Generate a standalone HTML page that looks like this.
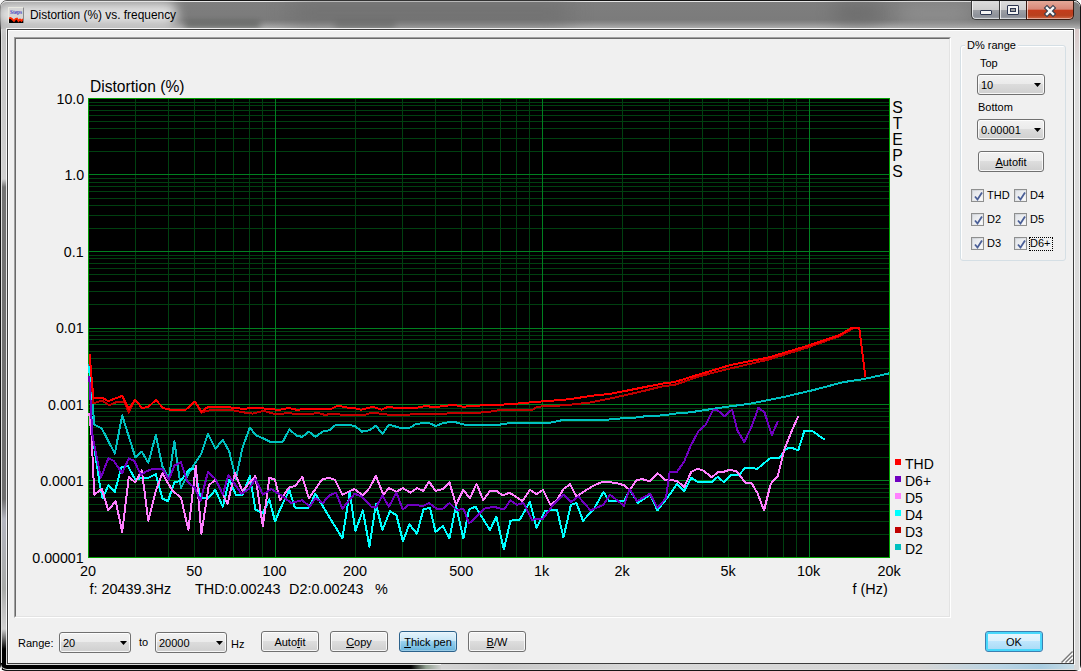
<!DOCTYPE html>
<html><head><meta charset="utf-8">
<style>
*{margin:0;padding:0;box-sizing:border-box}
html,body{width:1081px;height:671px;overflow:hidden;background:#fff}
body{position:relative;font-family:"Liberation Sans",sans-serif;font-size:11px;color:#000}
.a{position:absolute}
#frame{left:0;top:0;width:1081px;height:671px;border-radius:7px 7px 0 0;
 background:linear-gradient(90deg,#b9b9b9 0%,#9a9a9a 20%,#8a8a8a 50%,#8c8c8c 80%,#a0a0a0 100%);
 border:1px solid #2a2a2a;}
#client{left:7px;top:29px;width:1067px;height:635px;border:1px solid #3c3c3c;background:#f0f0f0;box-shadow:0 0 0 1px rgba(255,255,255,.85)}
#clientin{left:8px;top:30px;width:1065px;height:633px;border-top:1px solid #fff;border-left:1px solid #fff}
.btn{position:absolute;border:1px solid #707070;border-radius:3px;
 background:linear-gradient(#f2f2f2 0%,#ebebeb 50%,#dddddd 50%,#cfcfcf 100%);
 box-shadow:inset 0 0 0 1px rgba(255,255,255,.8);text-align:center;line-height:21px;font-size:11px}
.cmb{position:absolute;border:1px solid #707070;border-radius:3px;
 background:linear-gradient(#f2f2f2 0%,#ebebeb 45%,#dddddd 45%,#cfcfcf 100%);
 box-shadow:inset 0 0 0 1px rgba(255,255,255,.8);line-height:21px;font-size:11px;padding-left:3px}
.cmb:after{content:"";position:absolute;right:3px;top:8px;width:7px;height:4px;background:#000;clip-path:polygon(0 0,100% 0,50% 100%)}
.u{text-decoration:underline}
.cb{position:absolute;width:13px;height:13px;border:1px solid #8e8f8f;background:linear-gradient(135deg,#cbcfd5,#f6f6f6)}
.cb:before{content:"";position:absolute;left:1px;top:1px;width:9px;height:9px;background:linear-gradient(135deg,#e0e3e8,#fafafa)}
.cb svg{position:absolute;left:0;top:0}
.lbl{position:absolute;font-size:11px;white-space:nowrap}
</style></head><body>
<div id="frame" class="a" style="left:0;top:0;width:1081px;height:671px;border-radius:7px 7px 6px 6px;background:#d6d6d6;border:1px solid #151515"></div>
<div class="a" style="left:1px;top:1px;width:1079px;height:28px;border-radius:6px 6px 0 0;background:linear-gradient(#7e7e7e 0px,#7b7b7b 18px,#8a8a8a 21px,#b4b4b4 27px);border-top:1px solid #e6e6e6"></div>
<div class="a" style="left:185px;top:22px;width:75px;height:6px;background:#3c403c;filter:blur(3px);opacity:.6"></div>
<div class="a" style="left:335px;top:22px;width:60px;height:6px;background:#3c403c;filter:blur(3px);opacity:.45"></div>
<div class="a" style="left:1px;top:29px;width:6px;height:641px;background:linear-gradient(#c4c4c4 0px,#d0d0d0 150px,#747474 158px,#6e6e6e 470px,#b4b6c0 490px,#a8aaa8 560px,#c0c0c0 580px,#d0d0d0 600px,#000 620px,#000 641px);border-left:1px solid #e0e0e0"></div>
<div class="a" style="left:1px;top:663px;width:440px;height:7px;background:linear-gradient(90deg,#000 0,#000 410px,#90a090 425px,#d0d0d0 440px);border-bottom:1px solid #d8d8d8;border-radius:0 0 0 6px"></div>
<div class="a" style="left:1074px;top:29px;width:6px;height:641px;background:linear-gradient(#d8c8c8 0,#dcdcdc 40px,#d8d8d8 100%);border-right:1px solid #f0f0f0"></div>
<div class="a" style="left:290px;top:2px;width:280px;height:22px;background:#6c6c6c;filter:blur(12px);opacity:.8"></div>
<div class="a" style="left:835px;top:4px;width:45px;height:18px;background:#626262;filter:blur(10px);opacity:.7"></div>
<div class="a" style="left:900px;top:4px;width:70px;height:20px;background:#a0a0a0;filter:blur(10px);opacity:.6"></div>
<div id="glowt" class="a" style="left:-4px;top:2px;width:181px;height:25px;background:#e0e0e0;filter:blur(6px);border-radius:10px"></div>
<!-- icon -->
<div class="a" style="left:8px;top:7px;width:16px;height:16px;background:#d6d6d6;border-top:1px solid #e8e8e0;border-left:1px solid #e8e8e0;border-right:1px solid #8a8a8a;overflow:hidden">
 <svg class="a" style="left:-1px;top:-1px" width="16" height="16">
 <text x="2" y="7.3" font-size="5.8" font-family="Liberation Serif" fill="#4848c0" textLength="12" lengthAdjust="spacingAndGlyphs" font-weight="bold">Steps</text>
 <path d="M1 11.5 L2.5 11 L4 12 L6 14 L7.5 12 L9 11.5 L10.5 14 L12 12.5 L13.5 14 L15 12 V16 H1Z" fill="#000"/>
 <path d="M1 11.5 L2.5 11 L4 12 L6 14 L7.5 12 L9 11.5 L10.5 14 L12 12.5 L13.5 14 L15 12" stroke="#ff2800" stroke-width="1.8" fill="none"/></svg>
</div>
<div class="lbl" style="left:30px;top:8px;font-size:11.9px;color:#000">Distortion (%) vs. frequency</div>
<!-- caption buttons -->
<div class="a" style="left:971px;top:1px;width:29px;height:19px;border:1px solid #3a3a3a;border-top:none;border-right:none;border-radius:0 0 0 5px;background:linear-gradient(#dcdcdc 0%,#cdcdcd 48%,#9ea0a6 52%,#8c9098 85%,#a8abb2 100%);box-shadow:inset 1px 0 0 rgba(255,255,255,.7),inset 0 -1px 0 rgba(255,255,255,.55)"></div>
<div class="a" style="left:980px;top:10px;width:12px;height:5px;border:1px solid #2c3650;background:#f4f4f4;border-radius:1px"></div>
<div class="a" style="left:999px;top:1px;width:28px;height:19px;border-left:1px solid #3a3a3a;border-bottom:1px solid #3a3a3a;background:linear-gradient(#dcdcdc 0%,#cdcdcd 48%,#9ea0a6 52%,#8c9098 85%,#a8abb2 100%);box-shadow:inset 1px 0 0 rgba(255,255,255,.7),inset 0 -1px 0 rgba(255,255,255,.55)"></div>
<div class="a" style="left:1007px;top:5px;width:12px;height:10px;border:1px solid #2c3650;background:#f4f4f4;border-radius:1px"></div>
<div class="a" style="left:1010px;top:8px;width:6px;height:4px;border:1px solid #2c3650;background:#a0a0a0"></div>
<div class="a" style="left:1026px;top:1px;width:48px;height:19px;border:1px solid #3a1a10;border-top:none;border-radius:0 0 5px 0;background:linear-gradient(#e4a898 0%,#d88878 45%,#c43c1c 52%,#b8401e 80%,#d06848 100%);box-shadow:inset 1px 0 0 rgba(255,255,255,.6),inset 0 -1px 0 rgba(255,255,255,.45)"></div>
<svg class="a" style="left:1040px;top:2px" width="20" height="16"><path d="M7 6 L13 12 M13 6 L7 12" stroke="#3a4050" stroke-width="4.6" stroke-linecap="square"/><path d="M7 6 L13 12 M13 6 L7 12" stroke="#f8f8f8" stroke-width="2.4" stroke-linecap="square"/></svg>
<div id="client" class="a"></div>
<div id="clientin" class="a"></div>
<!-- chart panel sunken -->
<div class="a" style="left:14px;top:37px;width:937px;height:581px;border-top:1px solid #a0a0a0;border-left:1px solid #a0a0a0;border-right:1px solid #fff;border-bottom:1px solid #fff"></div>
<div class="a" style="left:15px;top:38px;width:935px;height:579px;border-top:1px solid #696969;border-left:1px solid #696969;border-right:1px solid #e3e3e3;border-bottom:1px solid #e3e3e3"></div>
<svg width="1081" height="671" style="position:absolute;left:0;top:0" font-family='"Liberation Sans", sans-serif' fill="#000">
<rect x="88" y="98" width="801" height="459" fill="#000"/>
<path d="M135.5 98V557M168.5 98V557M194.5 98V557M215.5 98V557M233.5 98V557M249.5 98V557M262.5 98V557M355.5 98V557M402.5 98V557M435.5 98V557M461.5 98V557M482.5 98V557M500.5 98V557M516.5 98V557M529.5 98V557M622.5 98V557M669.5 98V557M702.5 98V557M728.5 98V557M749.5 98V557M767.5 98V557M783.5 98V557M796.5 98V557M88 534.5H889M88 521.5H889M88 511.5H889M88 504.5H889M88 497.5H889M88 492.5H889M88 488.5H889M88 484.5H889M88 457.5H889M88 444.5H889M88 434.5H889M88 427.5H889M88 421.5H889M88 416.5H889M88 411.5H889M88 408.5H889M88 381.5H889M88 368.5H889M88 358.5H889M88 351.5H889M88 344.5H889M88 339.5H889M88 335.5H889M88 331.5H889M88 304.5H889M88 291.5H889M88 281.5H889M88 274.5H889M88 268.5H889M88 263.5H889M88 258.5H889M88 255.5H889M88 228.5H889M88 215.5H889M88 205.5H889M88 198.5H889M88 191.5H889M88 186.5H889M88 182.5H889M88 178.5H889M88 151.5H889M88 138.5H889M88 128.5H889M88 121.5H889M88 115.5H889M88 110.5H889M88 105.5H889M88 102.5H889" stroke="#004010" stroke-width="1" fill="none"/>
<path d="M275.5 98V557M542.5 98V557M809.5 98V557M88 480.5H889M88 404.5H889M88 328.5H889M88 251.5H889M88 174.5H889" stroke="#008020" stroke-width="1" fill="none"/>
<rect x="88.5" y="98.5" width="801" height="459" fill="none" stroke="#00a000"/>
<g clip-path="url(#clip)"><polyline points="89.2,364 94.3,424.7 101.8,428.5 114.8,453.6 122.2,415.4 135.3,457.3 141.8,451.7 148.3,462.9 155.8,435 162.3,466 168.8,478.8 174.4,441.5 180.9,488.1 189.3,472.2 201.4,453.6 207.9,434 215.4,449 222.8,439.6 229.3,451.7 235.8,478.8 242.4,448 249.8,427.5 255.4,435 263.8,438.7 271.2,442.4 282.4,442.4 289.3,429.4 296.8,435.9 302.3,436.8 308.9,431.6 315.4,436.8 322.8,431.6 329.3,430.3 335.9,424.7 344.2,424.7 354.5,425.7 361.9,431.6 369.4,430.3 375.9,425.7 382.4,434 388.9,424.7 399.2,427.5 410.4,427.5 415.9,423.8 429,422.9 435.5,426 443.9,422.9 453.2,421.6 464.4,424.7 480,424.7 499.2,424.7 511.3,422.9 549.5,422.9 562.5,420.1 597.9,419.7 603.5,420.1 618.4,418.6 638.9,417.3 646.3,416 663.1,415.4 675,413.6 690.4,412.3 720.9,407.6 751.4,403.5 781.9,397.4 812.4,390.3 843,382.2 863.3,379.1 879.6,375.6 889,373.4" stroke="#00c0c0" stroke-width="2" fill="none" stroke-linejoin="round" shape-rendering="crispEdges"/><polyline points="89.5,354 93.4,403.3 101.8,400.5 109.2,405.2 117.6,401.5 124.1,401.5 128.8,412.6 135.3,399.6 141.8,408 148.3,407 155.8,400 163.2,408 170.7,409.8 185.6,409.8 194.9,401.5 201.4,412.6 211.6,409.8 230.2,409.8 245.1,412.6 252.6,413.6 263.8,410.8 273.1,413.6 280,414.1 287.4,413 296.8,414.1 311.7,414.1 317.2,412.6 324.7,414.9 334,413.6 345.2,415.4 363.8,415.4 371.2,412.6 389.9,414.9 410.4,414.5 443.9,413.6 480,412.6 489.9,411.7 497.3,410.4 531.8,410.4 537.4,406.7 566.2,405.2 590.5,402.4 609.1,398.7 624,395.5 642.6,391.2 661.2,386.6 675,384.7 700.5,376 731,368.3 767.7,359.8 808.4,347.2 838.9,336.4 853,328.5" stroke="#c00000" stroke-width="2" fill="none" stroke-linejoin="round" shape-rendering="crispEdges"/><polyline points="89.2,366 92.4,435 99.9,485.3 102.7,498.3 108.3,485.3 114.8,491.8 121.3,467.6 127.8,465.7 135.3,479.7 141.8,477.8 148.3,477.8 155.8,474.1 162.3,498.3 167.9,501.1 174.4,482.5 180.9,480.6 189.3,469.4 194.9,469.4 200.5,498.3 207.9,498.3 215.4,489.9 222.8,506.7 229.3,479.7 235.8,494.6 242.4,495.5 249.8,476 255.4,509.5 262.8,513.2 269.4,499.2 275,521.6 280,509.5 289.3,490 294.9,507.6 308.9,507.6 315.4,493.7 329.3,517 342.4,538.4 349.8,491.8 355.4,530.9 362.9,510.4 369.4,546.7 375.9,503.9 382.4,530 389.9,511.3 396.4,515.1 402.9,541.1 409.4,524.4 416.9,533.7 423.4,509.5 429.9,507.6 435.5,531.8 442.9,526.2 449.5,538.4 456,505.8 463.4,538.4 469,509.5 475.5,506.7 489.9,530 496.4,516.9 503.9,549.5 510.4,520.7 519.7,519.7 529.9,502 536.5,528.1 544.8,511.3 556.9,509.5 563.5,537.4 570.9,504.8 576.5,503 583,520.7 594.2,508.6 603.5,491.8 609.1,501.1 624,501.1 629.6,489.9 638,503 650,494.6 657.5,510.4 670,494.1 677.1,483.9 684.2,491 691.4,477.8 697.5,481.9 711.7,481.9 717.8,476.8 723.9,482.3 731,474.8 739.2,474.8 745.3,467.6 757.5,468.7 769.7,458.5 779.9,457.5 786,448.7 792.1,447.9 798.2,450.4 804.3,431 812.4,431 824.7,439.8" stroke="#00ffff" stroke-width="2" fill="none" stroke-linejoin="round" shape-rendering="crispEdges"/><polyline points="89.2,412.9 91.5,435 94.3,494.6 101.8,489 108.3,510.4 115.7,501.1 122.2,531.8 128.8,476.9 135.3,482.5 141.8,470.4 148.3,520.7 155.8,490.9 162.3,473.2 172.5,490.9 180.9,497.4 188.4,530 195.8,465.7 201.4,533.7 208.8,485.3 215.4,479.7 227.5,503.9 234.9,473.2 242.4,490.9 255.4,476 262.8,526.2 269.4,477.8 275,479.7 280,500.2 289.3,487.1 294.9,486.2 302.3,476.9 308.9,498.3 321.9,479.7 328.4,477.8 334.9,479.7 342.4,494.6 354.5,489 362.9,495.5 369.4,488.1 375.9,476 383.4,494.6 388.9,488.1 396.4,491.8 402.9,488.1 410.4,492.7 416.9,488.1 423.4,490.9 429,481.6 435.5,490.9 442.9,489 449.5,482.5 456,504.8 463.4,489.9 469.9,498.3 476.5,483.8 483.4,500.2 489.9,490.9 496.4,490.9 502.9,495.5 509.5,492.7 522.5,501.1 529.9,489.9 536.5,494.2 543,489.9 550.4,504.8 556.9,500.2 563.5,489 570,484.3 576.5,496.5 584.9,490.9 594.2,485.3 603.5,481.6 616.5,483 624,485.3 629.6,489.9 637,479.7 642.6,479.3 650,481.2 657.5,473.2 665,479.7 670,479.9 677.1,480.9 684.2,487 691.4,471.7 697.5,468.7 703.6,470.7 711.7,477.2 718.8,471.7 723.9,471.7 730,469.7 737.2,471.7 745.3,482.9 751.4,482.9 757.5,493.1 764,510.4 770.7,483.9 777.9,475.8 784,450.4 792.1,430 798.2,416.3" stroke="#ff80ff" stroke-width="2" fill="none" stroke-linejoin="round" shape-rendering="crispEdges"/><polyline points="89.2,376 92.4,435 100.8,477.8 108.3,458.3 113.9,461 122.2,473.2 128.8,458.3 134.3,461 140.9,475 146.5,471.3 153.9,468.5 162.3,468.5 168.8,479.7 174.4,465.7 180.9,462 187.4,481.6 194.9,488.1 200.5,501.1 207.9,472.2 215.4,478.8 222.8,494.6 228.4,475 241.4,493.7 248.9,489 255.4,478.8 262.8,494.6 271.2,489 280,494.6 291.2,503 302.3,500.2 309.8,506.7 315.4,498.3 322.8,503 329.3,495.5 335.9,492.7 342.4,508.6 354.5,493.7 361.9,496.5 371.2,506.7 375.9,507.6 382.4,495.5 388.9,506.7 396.4,492.7 402.9,509.5 408.5,504.8 423.4,505.8 429,503 436.4,508.6 442.9,508.6 449.5,503 456.9,510.4 463.4,508.6 469,523.5 480,513.2 484.3,508.6 493.6,506.7 503.9,509.5 510.4,500.5 516.9,504.8 523.4,503 531.8,519.7 543,518.8 553.2,504.8 563.5,494.6 570.9,502 578.4,496.5 590.5,510.4 603.5,504.8 610,494.6 624,505.8 629.6,489 637,501.1 650,493.7 657.5,507.6 665.9,498.3 669.6,472.2 677.1,471.7 684.2,461.5 690.4,446.3 698.5,431 705.6,424.9 712.7,410.6 716.8,409.6 724.5,416.1 732.1,409.6 737.2,430 744.3,442.2 751.4,426.9 758.5,407.6 764.6,412.7 771.8,435.1 777.9,421.2" stroke="#7000c0" stroke-width="2" fill="none" stroke-linejoin="round" shape-rendering="crispEdges"/><polyline points="89.5,354 93.4,397.7 102.7,398.1 108.3,401.1 122.2,395.9 128.8,408.9 135.3,399.6 141.8,408 148.3,407 155.8,400 163.2,408 170.7,409.8 185.6,409.8 194.9,401.5 201.4,411.7 207.9,407 226.5,406.7 234,408 245.1,408.9 248.9,408 263.8,408.5 271.2,409.3 280,409.8 288.4,408 296.8,409.8 306.1,408.9 331.2,408.9 337.7,405.5 345.2,407.4 354.5,408 361,409.8 373.1,406.7 381.5,409.8 388,406.7 395.5,408 415.9,408 425.3,406.1 434.6,407 443.9,406.1 453.2,404.8 463.4,406.7 480,405.5 489.9,405.2 510.4,404.2 537.4,401.8 570,399.2 590.5,395.9 609.1,394 624,391.2 642.6,387.5 661.2,383.8 675,381.9 700.5,374 731,364.9 767.7,357.7 808.4,345.5 838.9,335.4 851.1,328.2 859.3,328.2 865.4,377.1" stroke="#ff0000" stroke-width="2" fill="none" stroke-linejoin="round" shape-rendering="crispEdges"/></g>
<clipPath id="clip"><rect x="88" y="98" width="802" height="460"/></clipPath>
<text x="84.2" y="103.9" text-anchor="end" font-size="14.2">10.0</text><text x="84.2" y="180.4" text-anchor="end" font-size="14.2">1.0</text><text x="83.6" y="256.9" text-anchor="end" font-size="14.2">0.1</text><text x="83.6" y="333.4" text-anchor="end" font-size="14.2">0.01</text><text x="83.6" y="409.9" text-anchor="end" font-size="14.2">0.001</text><text x="83.6" y="486.4" text-anchor="end" font-size="14.2">0.0001</text><text x="83.6" y="562.9" text-anchor="end" font-size="14.2">0.00001</text><text x="88.0" y="576" text-anchor="middle" font-size="14.4">20</text><text x="194.2" y="576" text-anchor="middle" font-size="14.4">50</text><text x="274.6" y="576" text-anchor="middle" font-size="14.4">100</text><text x="355.0" y="576" text-anchor="middle" font-size="14.4">200</text><text x="461.2" y="576" text-anchor="middle" font-size="14.4">500</text><text x="541.6" y="576" text-anchor="middle" font-size="14.4">1k</text><text x="622.0" y="576" text-anchor="middle" font-size="14.4">2k</text><text x="728.2" y="576" text-anchor="middle" font-size="14.4">5k</text><text x="808.6" y="576" text-anchor="middle" font-size="14.4">10k</text><text x="889.0" y="576" text-anchor="middle" font-size="14.4">20k</text><rect x="895" y="459" width="6" height="6" fill="#ff0000"/><text x="905" y="469" font-size="14">THD</text><rect x="895" y="476" width="6" height="6" fill="#7000c0"/><text x="905" y="486" font-size="14">D6+</text><rect x="895" y="493" width="6" height="6" fill="#ff80ff"/><text x="905" y="503" font-size="14">D5</text><rect x="895" y="510" width="6" height="6" fill="#00ffff"/><text x="905" y="520" font-size="14">D4</text><rect x="895" y="527" width="6" height="6" fill="#c00000"/><text x="905" y="537" font-size="14">D3</text><rect x="895" y="544" width="6" height="6" fill="#00c0c0"/><text x="905" y="554" font-size="14">D2</text><text x="897.5" y="112.6" text-anchor="middle" font-size="15.8">S</text><text x="897.5" y="128.6" text-anchor="middle" font-size="15.8">T</text><text x="897.5" y="144.6" text-anchor="middle" font-size="15.8">E</text><text x="897.5" y="160.6" text-anchor="middle" font-size="15.8">P</text><text x="897.5" y="176.6" text-anchor="middle" font-size="15.8">S</text><text x="90" y="92" font-size="15.6">Distortion (%)</text><text x="89.5" y="594" font-size="14.4">f: 20439.3Hz</text><text x="195" y="594" font-size="14.4">THD:0.00243</text><text x="289" y="594" font-size="14.4">D2:0.00243</text><text x="375" y="594" font-size="14.4">%</text><text x="852.5" y="594" font-size="14.4">f (Hz)</text>
</svg>
<!-- group box -->
<div class="a" style="left:960px;top:45px;width:106px;height:216px;border:1px solid #d5dfe5;border-radius:3px;box-shadow:inset 1px 1px 0 #fff"></div>
<div class="lbl" style="left:965px;top:39px;background:#f0f0f0;padding:0 2px">D% range</div>
<div class="lbl" style="left:980px;top:57px">Top</div>
<div class="cmb" style="left:977px;top:74px;width:68px;height:21px">10</div>
<div class="lbl" style="left:978px;top:101px">Bottom</div>
<div class="cmb" style="left:977px;top:119px;width:68px;height:21px">0.00001</div>
<div class="btn" style="left:978px;top:151px;width:66px;height:21px"><span class="u">A</span>utofit</div>
<!-- checkboxes -->
<div class="cb" style="left:971px;top:189px"><svg width="13" height="13"><path d="M3 6.5 L5.5 9.5 L10 2.5" stroke="#4a5f97" stroke-width="1.8" fill="none"/></svg></div><div class="lbl" style="left:987px;top:189px">THD</div><div class="cb" style="left:1014px;top:189px"><svg width="13" height="13"><path d="M3 6.5 L5.5 9.5 L10 2.5" stroke="#4a5f97" stroke-width="1.8" fill="none"/></svg></div><div class="lbl" style="left:1030px;top:189px">D4</div><div class="cb" style="left:971px;top:213px"><svg width="13" height="13"><path d="M3 6.5 L5.5 9.5 L10 2.5" stroke="#4a5f97" stroke-width="1.8" fill="none"/></svg></div><div class="lbl" style="left:987px;top:213px">D2</div><div class="cb" style="left:1014px;top:213px"><svg width="13" height="13"><path d="M3 6.5 L5.5 9.5 L10 2.5" stroke="#4a5f97" stroke-width="1.8" fill="none"/></svg></div><div class="lbl" style="left:1030px;top:213px">D5</div><div class="cb" style="left:971px;top:237px"><svg width="13" height="13"><path d="M3 6.5 L5.5 9.5 L10 2.5" stroke="#4a5f97" stroke-width="1.8" fill="none"/></svg></div><div class="lbl" style="left:987px;top:237px">D3</div><div class="cb" style="left:1014px;top:237px"><svg width="13" height="13"><path d="M3 6.5 L5.5 9.5 L10 2.5" stroke="#4a5f97" stroke-width="1.8" fill="none"/></svg></div><div class="lbl" style="left:1030px;top:237px">D6+</div><div class="a" style="left:1029px;top:237px;width:24px;height:14px;border:1px dotted #000"></div>
<svg class="a" style="left:1058px;top:649px" width="15" height="14"><path d="M3.5 13.5 L14.5 2.5 M7.5 13.5 L14.5 6.5 M11.5 13.5 L14.5 10.5" stroke="#777" stroke-width="1.4"/><path d="M4.5 14.5 L15 4 M8.5 14.5 L15 8 M12.5 14.5 L15 12" stroke="#fff" stroke-width="1"/></svg>
<div class="a" style="left:441px;top:664px;width:633px;height:6px;background:linear-gradient(90deg,#d4d4d4 0,#c8c8c8 60px,#d8d8d8 200px,#d6d6d6 480px,#b8d4e4 560px,#a8cce0 600px,#c8dce6 633px);border-bottom:1px solid #e0e0e0"></div>
<!-- bottom controls -->
<div class="lbl" style="left:18px;top:637px">Range:</div>
<div class="cmb" style="left:59px;top:632px;width:72px;height:21px">20</div>
<div class="lbl" style="left:139px;top:636px">to</div>
<div class="cmb" style="left:155px;top:632px;width:72px;height:21px">20000</div>
<div class="lbl" style="left:231px;top:638px">Hz</div>
<div class="btn" style="left:261px;top:631px;width:58px;height:21px">Auto<span class="u">f</span>it</div>
<div class="btn" style="left:330px;top:631px;width:58px;height:21px"><span class="u">C</span>opy</div>
<div class="btn" style="left:399px;top:631px;width:58px;height:21px;border-color:#2c628b;background:linear-gradient(#e5f4fc 0%,#c4e5f6 50%,#98d1ef 50%,#68b3db 100%);box-shadow:inset 0 0 0 1px rgba(255,255,255,.3)"><span class="u">T</span>hick pen</div>
<div class="btn" style="left:468px;top:631px;width:58px;height:21px"><span class="u">B</span>/W</div>
<div class="btn" style="left:985px;top:631px;width:58px;height:21px;border-color:#3c7fb1;background:linear-gradient(#eaf6fd 0%,#d9f0fc 50%,#bee6fd 50%,#a7d9f5 100%);box-shadow:inset 0 0 0 2px #48d8fb">OK</div>
</body></html>
